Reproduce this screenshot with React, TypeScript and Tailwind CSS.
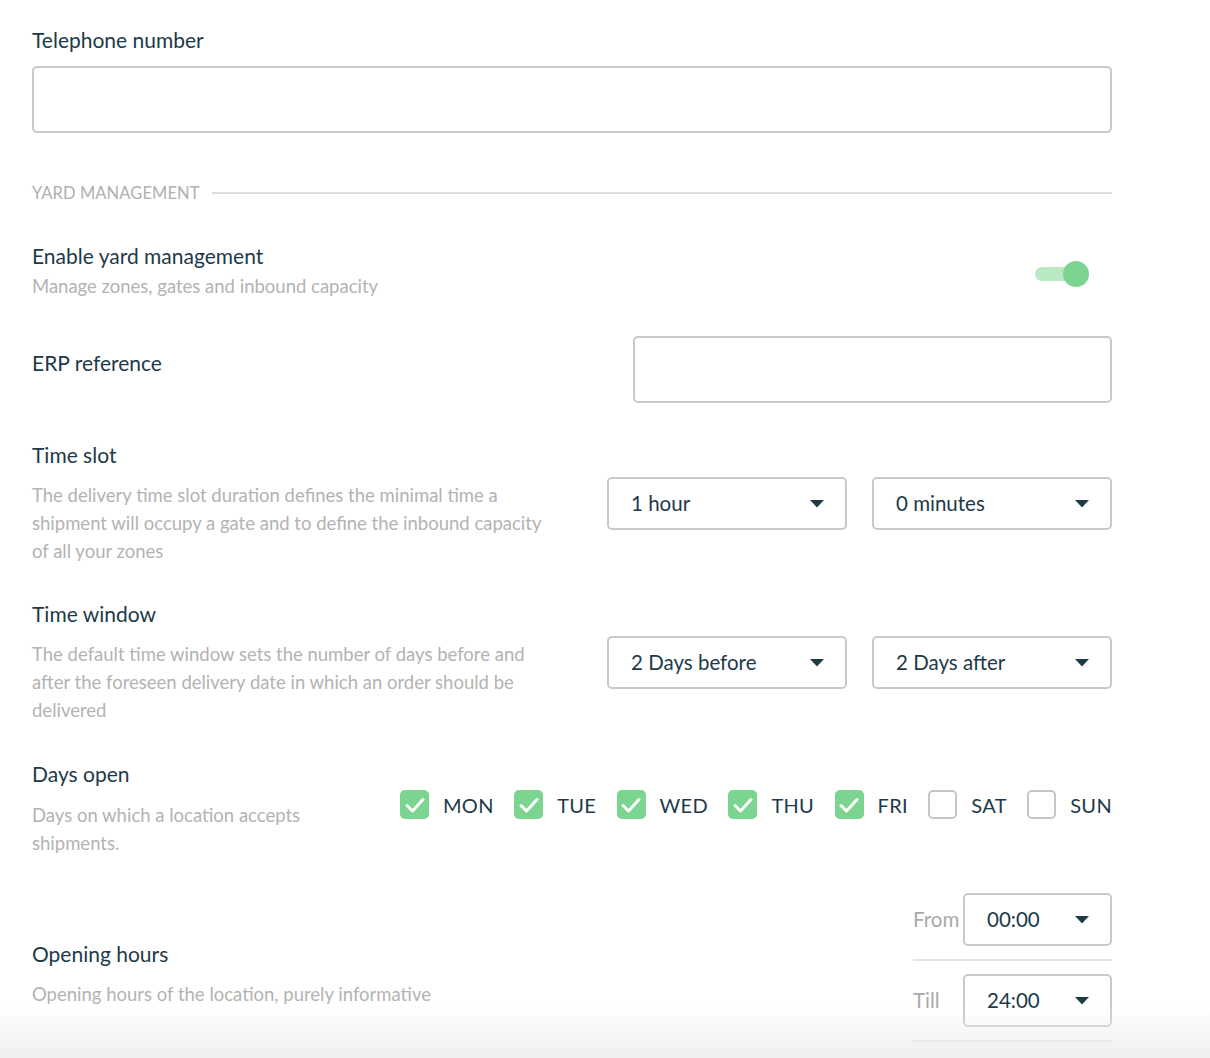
import React from "react"

const ink = "text-[#1d3a48]"
const muted = "text-[#b3b3b3]"

function Caret() {
  return (
    <svg width="14" height="8" viewBox="0 0 14 8" aria-hidden>
      <polygon points="0,0 14,0 7,7.5" fill="#1d3a48" />
    </svg>
  )
}

function Select({ value, className = "" }: { value: string; className?: string }) {
  return (
    <div
      className={`flex h-[53px] items-center justify-between rounded-[5px] border-2 border-[#c9c9c9] bg-white pl-[22px] pr-[21px] text-[20.5px] ${ink} ${className}`}
    >
      <span>{value}</span>
      <Caret />
    </div>
  )
}

function Checkbox({ label, checked }: { label: string; checked: boolean }) {
  return (
    <div className="flex items-center gap-[14px]">
      {checked ? (
        <span className="flex h-[29px] w-[29px] items-center justify-center rounded-[5px] bg-[#7bd48f]">
          <svg width="20" height="16" viewBox="0 0 20 16" fill="none" aria-hidden>
            <path d="M2 8.5l5.5 5.5L18 2.5" stroke="white" strokeWidth="3" strokeLinecap="round" strokeLinejoin="round" />
          </svg>
        </span>
      ) : (
        <span className="h-[29px] w-[29px] rounded-[5px] border-2 border-[#c6c6c6] bg-white" />
      )}
      <span className={`text-[20px] leading-[28px] tracking-[0.3px] ${ink}`}>{label}</span>
    </div>
  )
}

function Title({ children }: { children: React.ReactNode }) {
  return <div className={`text-[21px] leading-[28px] ${ink}`}>{children}</div>
}

function Desc({ children, className = "" }: { children: React.ReactNode; className?: string }) {
  return <p className={`text-[18.5px] leading-[28px] ${muted} ${className}`}>{children}</p>
}

const days: [string, boolean][] = [
  ["MON", true],
  ["TUE", true],
  ["WED", true],
  ["THU", true],
  ["FRI", true],
  ["SAT", false],
  ["SUN", false],
]

export default function App() {
  return (
    <div
      className="relative h-[1058px] overflow-hidden bg-white"
      style={{ fontFamily: "Lato, 'Noto Sans', sans-serif" }}
    >
      <div className="ml-8 w-[1080px] pt-[26px]">
        {/* telephone */}
        <Title>Telephone number</Title>
        <div className="mt-[12px] h-[67px] rounded-[5px] border-2 border-[#c9c9c9]" />

        {/* section header */}
        <div className="mt-[48px] flex items-center gap-3">
          <span className="text-[16.5px] leading-[24px] tracking-[0.1px] text-[#b0b0b0]">YARD MANAGEMENT</span>
          <div className="h-[2px] flex-1 bg-[#dedede]" />
        </div>

        {/* enable yard */}
        <div className="mt-[37px] flex items-center justify-between">
          <div>
            <Title>Enable yard management</Title>
            <Desc className="mt-[2px]">Manage zones, gates and inbound capacity</Desc>
          </div>
          <div className="relative mr-[23px] mt-[6px] h-[26px] w-[54px]">
            <div className="absolute left-0 top-[6px] h-[14px] w-[40px] rounded-full bg-[#b9e9c4]" />
            <div className="absolute right-0 top-0 h-[26px] w-[26px] rounded-full bg-[#7bd48f]" />
          </div>
        </div>

        {/* erp */}
        <div className="mt-[36px] flex items-start justify-between">
          <div className="mt-[13px]">
            <Title>ERP reference</Title>
          </div>
          <div className="h-[67px] w-[479px] rounded-[5px] border-2 border-[#c9c9c9]" />
        </div>

        {/* time slot */}
        <div className="mt-[38px] flex items-start justify-between">
          <div className="w-[512px]">
            <Title>Time slot</Title>
            <Desc className="mt-[12px]">
              The delivery time slot duration defines the minimal time a shipment will occupy a gate and to define
              the inbound capacity of all your zones
            </Desc>
          </div>
          <div className="mt-[36px] flex gap-[25px]">
            <Select value="1 hour" className="w-[240px]" />
            <Select value="0 minutes" className="w-[240px]" />
          </div>
        </div>

        {/* time window */}
        <div className="mt-[35px] flex items-start justify-between">
          <div className="w-[512px]">
            <Title>Time window</Title>
            <Desc className="mt-[12px]">
              The default time window sets the number of days before and after the foreseen delivery date in which
              an order should be delivered
            </Desc>
          </div>
          <div className="mt-[36px] flex gap-[25px]">
            <Select value="2 Days before" className="w-[240px]" />
            <Select value="2 Days after" className="w-[240px]" />
          </div>
        </div>

        {/* days open */}
        <div className="mt-[36px] flex items-start justify-between">
          <div className="w-[300px]">
            <Title>Days open</Title>
            <Desc className="mt-[13px]">Days on which a location accepts shipments.</Desc>
          </div>
          <div className="mt-[30px] flex w-[712px] justify-between">
            {days.map(([d, c]) => (
              <Checkbox key={d} label={d} checked={c} />
            ))}
          </div>
        </div>

        {/* opening hours */}
        <div className="mt-[36px] flex items-center justify-between">
          <div className="mt-[12px]">
            <Title>Opening hours</Title>
            <Desc className="mt-[12px]">Opening hours of the location, purely informative</Desc>
          </div>
          <div className="w-[199px]">
            <div className="flex items-center">
              <span className="w-[50px] text-[20.5px] text-[#a9a9a9]">From</span>
              <Select value="00:00" className="flex-1" />
            </div>
            <div className="my-[13px] h-[2px] bg-[#e3e3e3]" />
            <div className="flex items-center">
              <span className="w-[50px] text-[20.5px] text-[#a9a9a9]">Till</span>
              <Select value="24:00" className="flex-1" />
            </div>
            <div className="mt-[13px] h-[2px] bg-[#e3e3e3]" />
          </div>
        </div>
      </div>

      <div className="pointer-events-none absolute inset-x-0 bottom-0 h-[52px] bg-gradient-to-b from-white/0 to-[#ededed]/90" />
    </div>
  )
}
